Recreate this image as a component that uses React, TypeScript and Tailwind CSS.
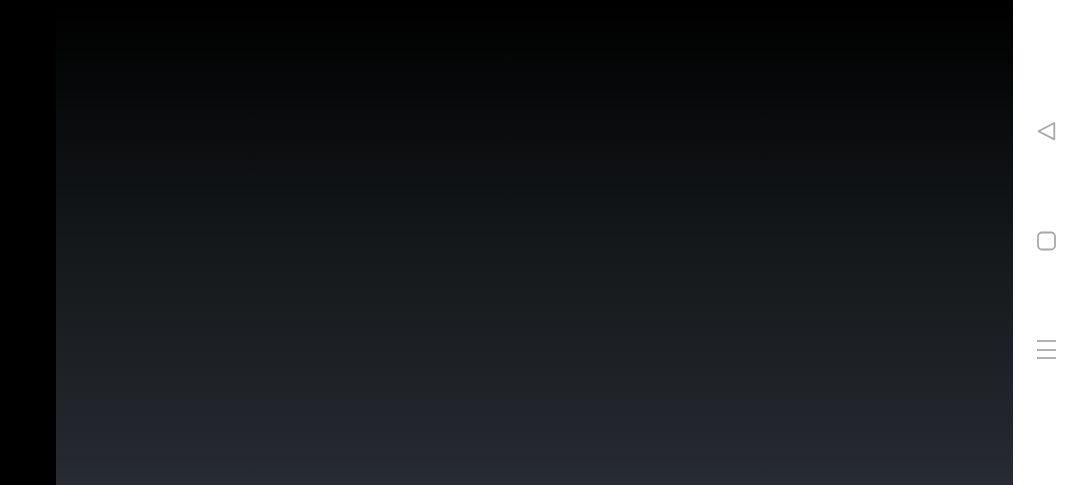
export default function App() {
  return (
    <div className="flex h-[485px] w-[1080px] overflow-hidden bg-black">
      <div className="w-14 shrink-0 bg-black" />
      <div className="w-[957px] shrink-0 bg-linear-to-b/srgb from-[#000000] from-[2%] via-[#14181a] via-[50%] to-[#272b32]" />
      <nav className="flex flex-1 flex-col items-center bg-white pt-[121px]">
        <svg width="20" height="20" viewBox="0 0 20 20" fill="none" stroke="#a8a8a8" strokeWidth="1.8" strokeLinejoin="round">
          <path d="M1.5 10.2 17.3 2v16.4z" />
        </svg>
        <svg className="mt-[90px]" width="20" height="20" viewBox="0 0 20 20" fill="none" stroke="#a8a8a8" strokeWidth="1.8">
          <rect x="1" y="1.5" width="17" height="17" rx="4" />
        </svg>
        <div className="mt-[89px] flex w-[19px] flex-col gap-[6.5px]">
          <div className="h-[2px] bg-[#b0b0b0]" />
          <div className="h-[2px] bg-[#b0b0b0]" />
          <div className="h-[2px] bg-[#b0b0b0]" />
        </div>
      </nav>
    </div>
  );
}
